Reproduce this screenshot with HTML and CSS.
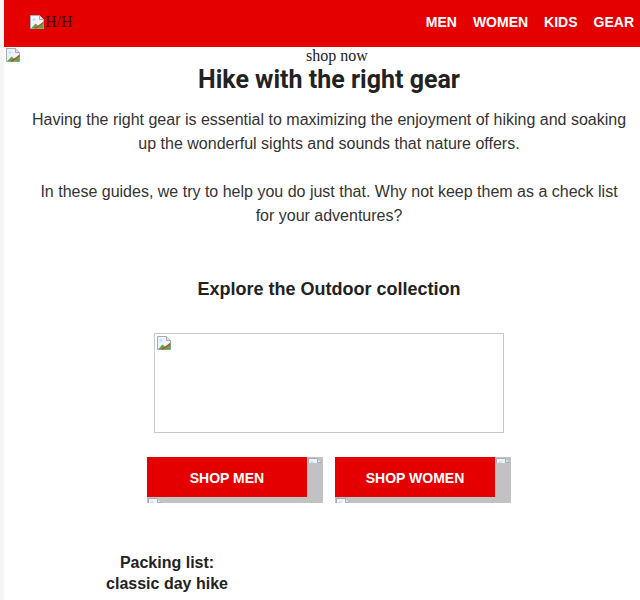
FILE: index.html
```html
<html>
<head>
  <title>Hike with the right gear</title>
  <link rel="stylesheet" href="styles.css">
</head>
<body>
<svg class="defs" width="0" height="0">
  <symbol id="broken" viewBox="0 0 16 16">
    <path d="M1.5 1.5h9l4 4v9h-13z" fill="#eef3f9" stroke="#a3abb5"/>
    <path d="M10.5 1.5v4h4" fill="#dfe5ec" stroke="#a3abb5"/>
    <path d="M2 14.5l4.5-5 3 2.5 5-4.5v7z" fill="#5aa845"/>
    <path d="M6 14.5l8.5-6" stroke="#d83a2a" stroke-width="1.2"/>
    <circle cx="5" cy="5.5" r="1.6" fill="#c9def2"/>
  </symbol>
</svg>
<div class="page">
  <div class="header">
    <div class="logo"><svg class="broken"><use href="#broken"/></svg>H/H</div>
    <div class="nav">
      <a>MEN</a>
      <a>WOMEN</a>
      <a>KIDS</a>
      <a>GEAR</a>
    </div>
  </div>

  <div class="hero">
    <svg class="broken"><use href="#broken"/></svg>
    <span class="hero-alt">shop now</span>
  </div>

  <div class="content">
    <h1>Hike with the right gear</h1>
    <p>Having the right gear is essential to maximizing the enjoyment of hiking and soaking up the wonderful sights and sounds that nature offers.</p>
    <p class="second">In these guides, we try to help you do just that. Why not keep them as a check list for your adventures?</p>

    <h2>Explore the Outdoor collection</h2>
    <div class="banner"><svg class="broken"><use href="#broken"/></svg></div>

    <div class="buttons">
      <div class="btn">
        <div class="btn-face">SHOP MEN</div>
        <div class="corner-tr"><svg class="broken"><use href="#broken"/></svg></div>
        <div class="corner-bl"><svg class="broken"><use href="#broken"/></svg></div>
      </div>
      <div class="btn">
        <div class="btn-face">SHOP WOMEN</div>
        <div class="corner-tr"><svg class="broken"><use href="#broken"/></svg></div>
        <div class="corner-bl"><svg class="broken"><use href="#broken"/></svg></div>
      </div>
    </div>
  </div>

  <div class="guides">
    <div class="guide">Packing list:<br>classic day hike</div>
    <div></div>
  </div>
</div>
</body>
</html>
```

FILE: styles.css
```css
html, body {
  margin: 0;
  padding: 0;
  background: #f6f6f6;
  overflow: hidden;
}
.defs { position: absolute; }

.page {
  margin-left: 4px;
  background: #fff;
  min-height: 600px;
  font-family: "Liberation Sans", Arial, sans-serif;
  color: #333;
}

.broken { width: 16px; height: 16px; display: block; flex: none; }

.header {
  background: #e50000;
  height: 47px;
  display: flex;
  align-items: center;
  justify-content: space-between;
  padding: 0 6px 0 25px;
}
.logo {
  display: flex;
  align-items: center;
  font: 16px "Liberation Serif", serif;
  color: #3a0000;
  margin-top: -3px;
}
.nav { display: flex; gap: 16px; margin-top: -3px; }
.nav a {
  color: #fff;
  font-weight: bold;
  font-size: 14px;
}

.hero {
  height: 18px;
  display: flex;
  align-items: flex-start;
  padding-left: 1px;
}
.hero-alt {
  font: 16px "Liberation Serif", serif;
  color: #222;
  margin: 1px 0 0 285px;
  line-height: 16px;
}

.content {
  padding-left: 14px;
  text-align: center;
}
h1 {
  font: bold 25px Roboto, sans-serif;
  line-height: 30px;
  color: #222;
  margin: 0;
}
p {
  width: 598px;
  margin: 13px auto 0;
  font-size: 16px;
  line-height: 24px;
}
p.second { margin-top: 24px; }

h2 {
  font-size: 18px;
  line-height: 24px;
  color: #222;
  margin: 49px 0 0;
}

.banner {
  width: 350px;
  height: 100px;
  box-sizing: border-box;
  border: 1px solid #c8c8c8;
  margin: 32px auto 0;
  padding: 1px;
}

.buttons {
  display: flex;
  justify-content: center;
  gap: 12px;
  margin-top: 24px;
}
.btn {
  position: relative;
  width: 176px;
  height: 46px;
  background: #c2c2c2;
  overflow: hidden;
}
.btn-face {
  width: 160px;
  height: 40px;
  background: #e50000;
  color: #fff;
  font-weight: bold;
  font-size: 14px;
  line-height: 42px;
}
.corner-tr, .corner-bl {
  position: absolute;
  width: 16px;
  height: 6px;
  overflow: hidden;
}
.corner-tr { right: 0; top: 0; }
.corner-bl { left: 0; top: 40px; }

.guides {
  display: grid;
  grid-template-columns: 326px 1fr;
  margin-top: 49px;
}
.guide {
  text-align: center;
  font-weight: bold;
  font-size: 16px;
  line-height: 21px;
  color: #222;
}
```
